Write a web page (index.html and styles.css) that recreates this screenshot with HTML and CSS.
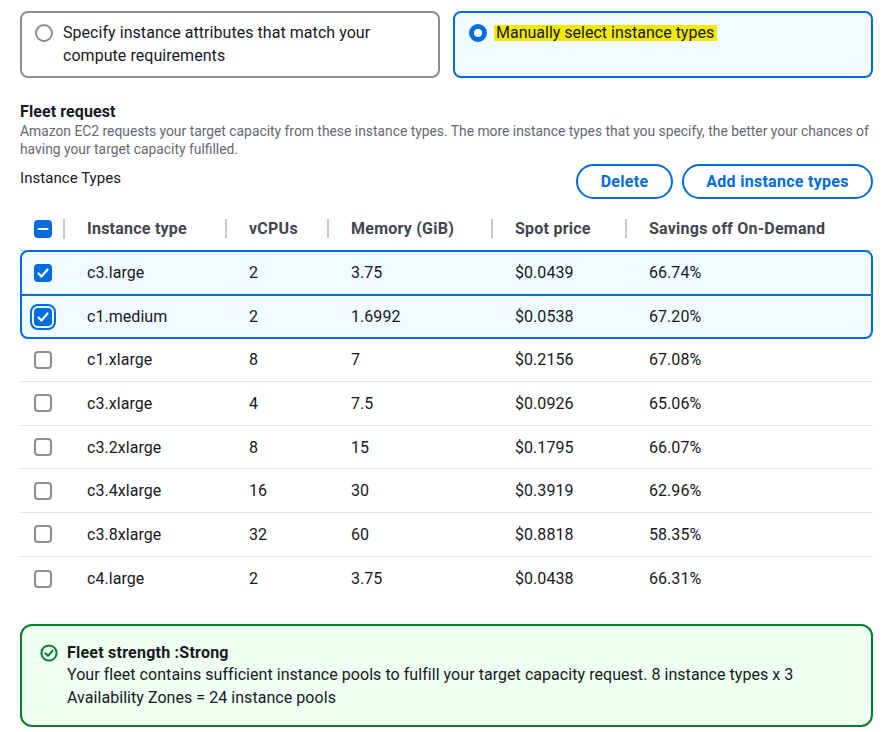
FILE: index.html
```html
<!DOCTYPE html>
<html lang="en">
<head>
<meta charset="utf-8">
<title>Fleet request</title>
<link rel="stylesheet" href="styles.css">
</head>
<body>
<div class="tiles">
  <div class="tile tile-off"><span class="radio"></span><span>Specify instance attributes that match your compute requirements</span></div>
  <div class="tile tile-on"><span class="radio radio-on"></span><span><mark>Manually select instance types</mark></span></div>
</div>
<h2 class="title">Fleet request</h2>
<p class="desc">Amazon EC2 requests your target capacity from these instance types. The more instance types that you specify, the better your chances of having your target capacity fulfilled.</p>
<div class="toolbar">
  <span class="label">Instance Types</span>
  <div class="actions"><button class="btn btn-del">Delete</button><button class="btn btn-add">Add instance types</button></div>
</div>
<div class="table">
  <div class="row head">
    <span class="cell-check"><span class="box box-on"><svg viewBox="0 0 18 18"><path d="M4.5 9h9" /></svg></span></span>
    <span class="th">Instance type</span><span class="th">vCPUs</span><span class="th">Memory (GiB)</span><span class="th">Spot price</span><span class="th">Savings off On-Demand</span>
  </div>
  <div class="row sel first">
    <span class="cell-check"><span class="box box-on"><svg viewBox="0 0 18 18"><path d="M4.5 9.5l3 3 6-7" /></svg></span></span>
    <span>c3.large</span><span>2</span><span>3.75</span><span>$0.0439</span><span>66.74%</span>
  </div>
  <div class="row sel last">
    <span class="cell-check"><span class="box box-on box-focus"><svg viewBox="0 0 18 18"><path d="M4.5 9.5l3 3 6-7" /></svg></span></span>
    <span>c1.medium</span><span>2</span><span>1.6992</span><span>$0.0538</span><span>67.20%</span>
  </div>
  <div class="row"><span class="cell-check"><span class="box"></span></span><span>c1.xlarge</span><span>8</span><span>7</span><span>$0.2156</span><span>67.08%</span></div>
  <div class="row"><span class="cell-check"><span class="box"></span></span><span>c3.xlarge</span><span>4</span><span>7.5</span><span>$0.0926</span><span>65.06%</span></div>
  <div class="row"><span class="cell-check"><span class="box"></span></span><span>c3.2xlarge</span><span>8</span><span>15</span><span>$0.1795</span><span>66.07%</span></div>
  <div class="row"><span class="cell-check"><span class="box"></span></span><span>c3.4xlarge</span><span>16</span><span>30</span><span>$0.3919</span><span>62.96%</span></div>
  <div class="row"><span class="cell-check"><span class="box"></span></span><span>c3.8xlarge</span><span>32</span><span>60</span><span>$0.8818</span><span>58.35%</span></div>
  <div class="row end"><span class="cell-check"><span class="box"></span></span><span>c4.large</span><span>2</span><span>3.75</span><span>$0.0438</span><span>66.31%</span></div>
</div>
<div class="alert">
  <svg class="alert-icon" viewBox="0 0 18 18"><circle cx="9" cy="9" r="7.6" /><path d="M5.4 9.2l2.6 2.6 4.6-5.2" /></svg>
  <div class="alert-body">
    <strong>Fleet strength :Strong</strong>
    <p>Your fleet contains sufficient instance pools to fulfill your target capacity request. 8 instance types x 3 Availability Zones = 24 instance pools</p>
  </div>
</div>
</body>
</html>
```
FILE: styles.css
```css
* { box-sizing: border-box; }
html, body { margin: 0; background: #fff; }
body {
  width: 893px;
  height: 732px;
  overflow: hidden;
  padding: 11px 20px 0;
  font-family: Roboto, "Open Sans", sans-serif;
  font-size: 16px;
  line-height: 23px;
  letter-spacing: 0.05px;
  color: #16191f;
}
.tiles { display: grid; grid-template-columns: 420px 420px; column-gap: 13px; }
.tile {
  height: 67px;
  border: 2px solid #8c8c94;
  border-radius: 8px;
  padding: 8px 14px;
  display: flex;
  gap: 9px;
  background: #fff;
}
.tile-off { padding-left: 13px; gap: 10px; }
.tile-on { border-color: #006ce0; background: #f0fbff; }
.radio {
  flex: none;
  width: 18px;
  height: 18px;
  margin-top: 3px;
  border: 2px solid #8c8c94;
  border-radius: 50%;
  background: #fff;
}
.radio-on { border: 5px solid #006ce0; }
mark { background: #f2ea00; color: inherit; padding: 0 3px 0 2px; margin-left: -2px; display: inline-block; height: 16px; line-height: 16px; letter-spacing: 0; }
.title { margin: 24px 0 0; font-size: 16px; line-height: 20px; font-weight: 700; letter-spacing: 0.1px; color: #16191f; }
.desc { margin: 0; font-size: 13.85px; line-height: 18px; letter-spacing: 0; color: #656871; }
.toolbar { display: flex; justify-content: space-between; align-items: flex-start; margin-top: 1px; height: 48px; }
.label { font-size: 15px; line-height: 20px; margin-top: 9px; }
.actions { display: flex; gap: 9px; margin-top: 5px; }
.btn {
  height: 35px;
  padding: 0;
  border: 2px solid #006ce0;
  border-radius: 18px;
  background: #fff;
  color: #006ce0;
  font: 700 16px Roboto, "Open Sans", sans-serif;
  letter-spacing: 0.28px;
}
.btn-del { width: 97px; }
.btn-add { width: 191px; }
.row {
  display: grid;
  grid-template-columns: 67px 162px 102px 164px 134px 1fr;
  align-items: center;
  height: 43.7px;
  border-bottom: 1px solid #e4e4e8;
}
.head { height: 44px; border-bottom-color: #c6c6cd; }
.cell-check { display: flex; padding-left: 14px; }
.th {
  font-weight: 700;
  letter-spacing: 0.24px;
  color: #424650;
  position: relative;
}
.th::before {
  content: "";
  position: absolute;
  left: -24px;
  top: 2px;
  width: 2px;
  height: 19px;
  background: #c6c6cd;
}
.box {
  width: 18px;
  height: 18px;
  border: 2px solid #8c8c94;
  border-radius: 4px;
  display: block;
  background: #fff;
  position: relative;
}
.box-on { border: 0; background: #006ce0; }
.box svg { display: block; width: 18px; height: 18px; fill: none; stroke: #fff; stroke-width: 2.2; stroke-linecap: round; stroke-linejoin: round; }
.box-focus { outline: 2px solid #006ce0; outline-offset: 2px; }
.head .cell-check { position: relative; }
.head .cell-check::after {
  content: "";
  position: absolute;
  left: 43px;
  top: 0;
  width: 2px;
  height: 19px;
  background: #c6c6cd;
}
.sel {
  background: #f0fbff;
  border: 2px solid #006ce0;
  margin: -1px 0;
  height: 45.7px;
  position: relative;
  grid-template-columns: 65px 162px 102px 164px 134px 1fr;
}
.sel .cell-check { padding-left: 12px; }
.first { border-radius: 8px 8px 0 0; }
.last { border-radius: 0 0 8px 8px; margin-top: -2px; }
.end { border-bottom: 0; }
.alert {
  margin-top: 23px;
  width: 853px;
  height: 103px;
  border: 2px solid #00802f;
  border-radius: 12px;
  background: #effff1;
  padding: 16px 18px;
  display: flex;
  gap: 9px;
}
.alert-icon { flex: none; width: 18px; height: 18px; margin-top: 2px; fill: none; stroke: #00802f; stroke-width: 2; stroke-linecap: round; stroke-linejoin: round; }
.alert-body strong { display: block; line-height: 21px; letter-spacing: 0.23px; }
.alert-body p { margin: 0; line-height: 23px; }
```
